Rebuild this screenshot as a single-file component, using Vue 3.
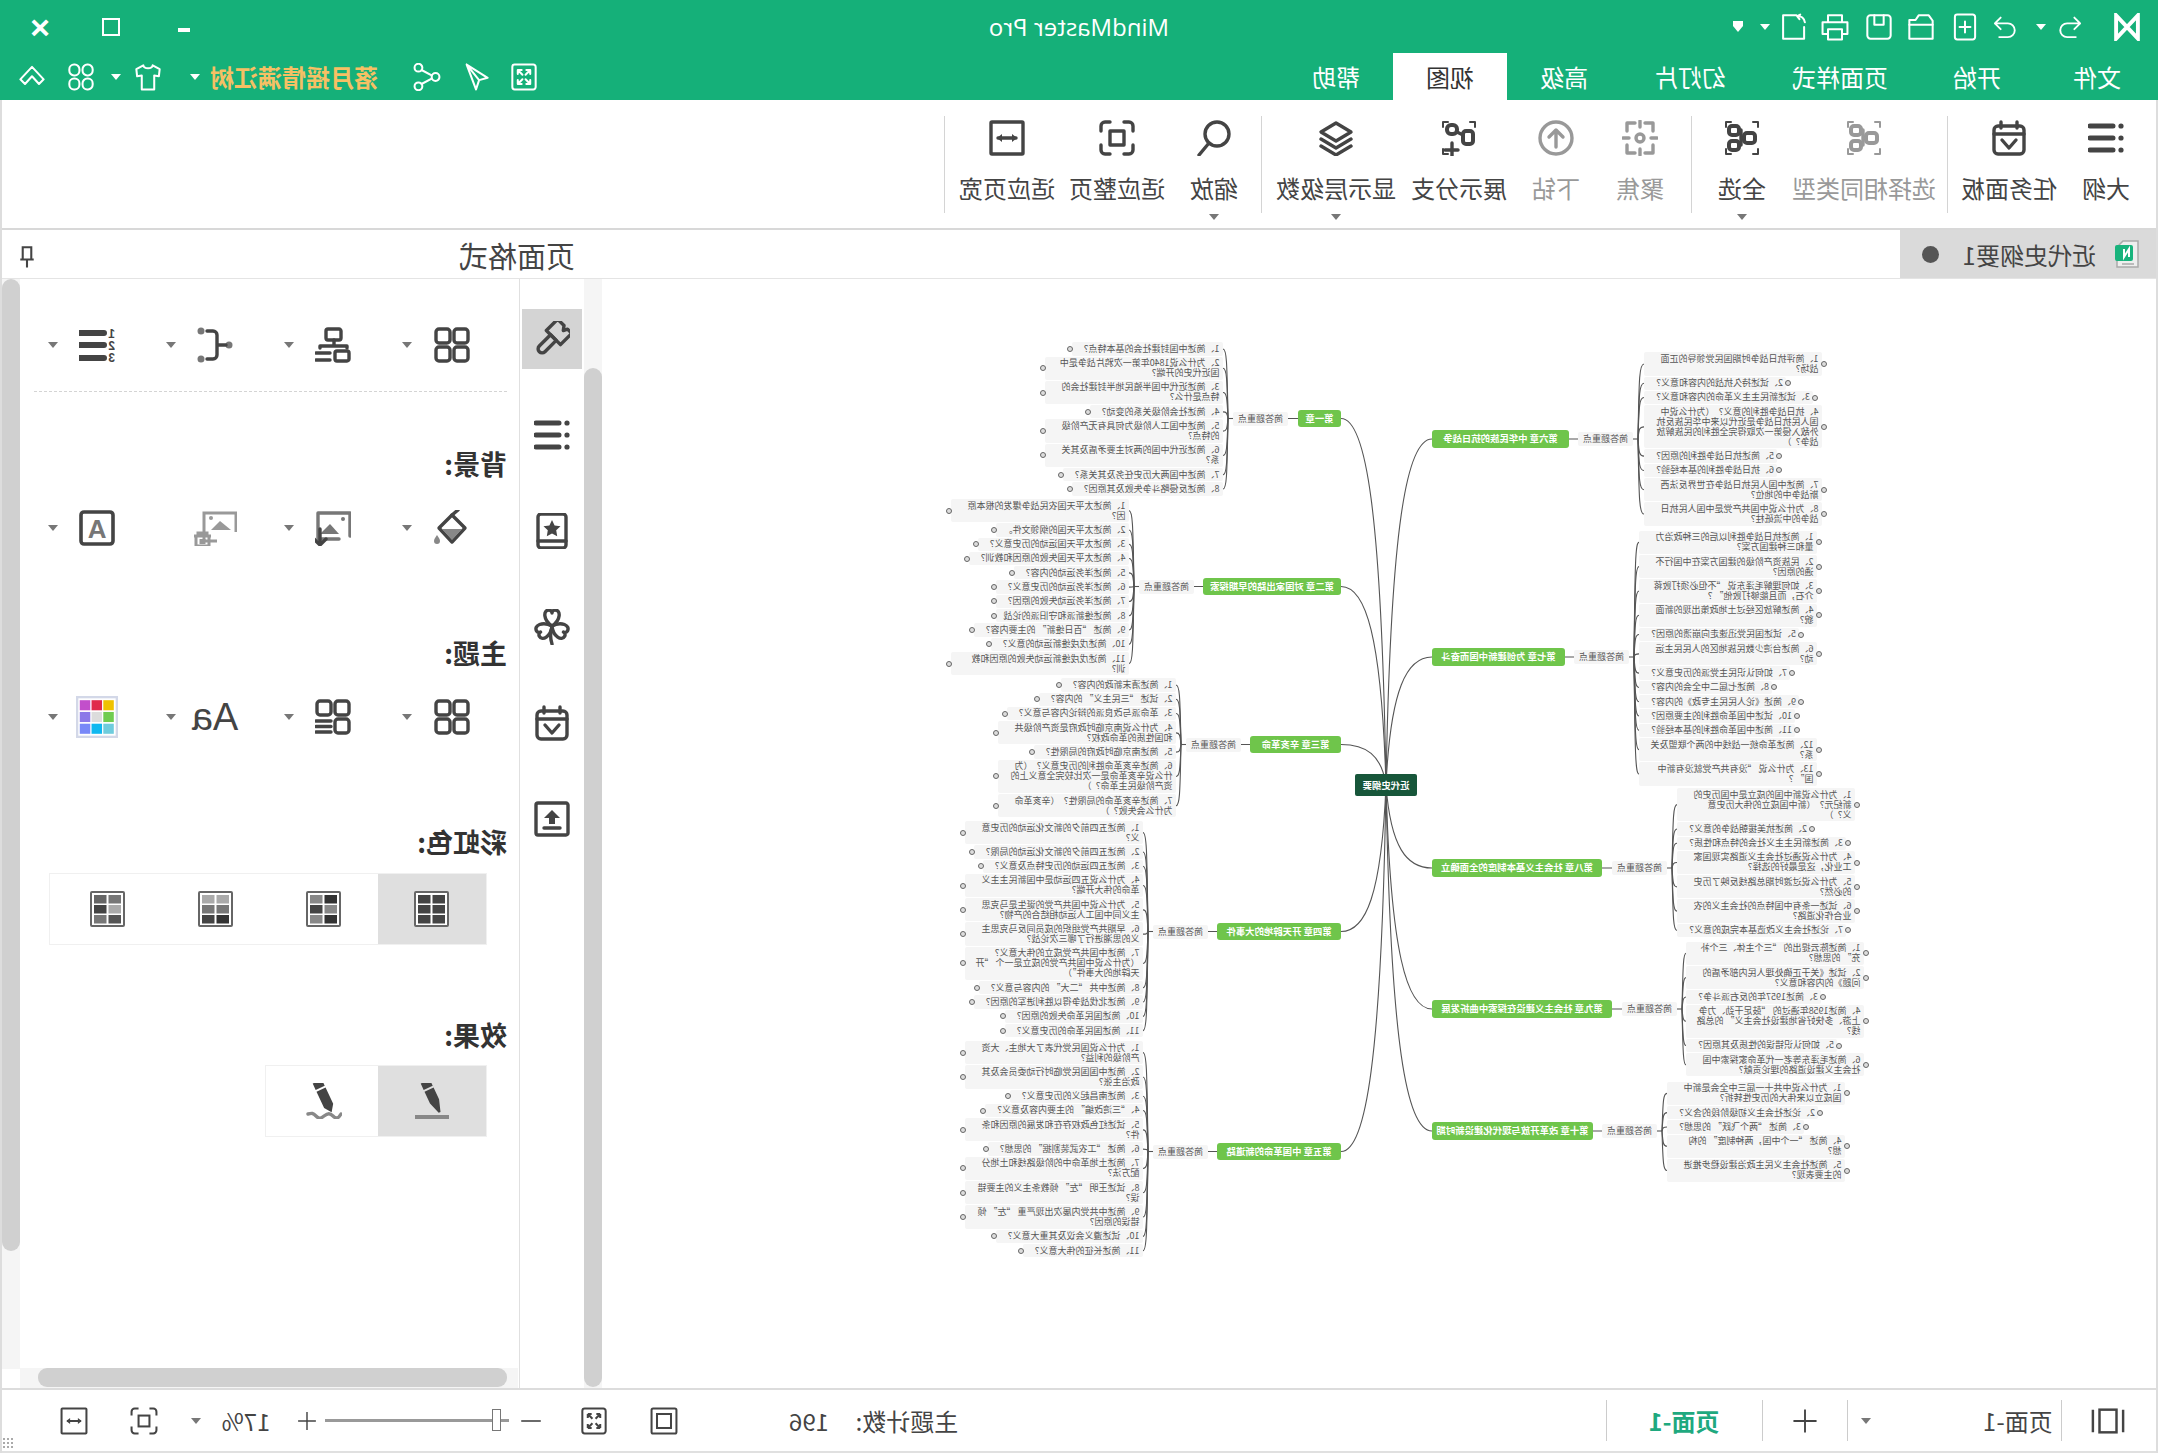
<script setup>
// the reference is a horizontally flipped window: everything below is laid out
// in the window's own coordinates and .app flips it once at the root
const dot = (x, y) => `<circle cx="${x}" cy="${y}" r="2.6" fill="currentColor" stroke="none"/>`
const outlineIcon = dot(3, 6) + dot(3, 18) + dot(3, 30) + '<path stroke-width="5" d="M11 6h23M11 18h23M11 30h23"/>'
const calendarIcon = '<rect x="3" y="6" width="30" height="28" rx="4"/><path d="M3 14h30M10 2v6M26 2v6M11 20l7 8 7-8"/>'
const corners = '<path stroke-width="2" d="M7 2H2v5M29 2h5v5M2 29v5h5M34 29v5h-5"/>'
const nodes = '<rect x="5" y="13" width="11" height="10" rx="3" stroke-width="4"/><rect x="21" y="6" width="10" height="9" rx="3" stroke-width="4"/><rect x="21" y="21" width="10" height="9" rx="3" stroke-width="4"/><path d="M16 18h3V10h2M19 18v7h2"/>'

const icons = {
  logo: '<path stroke-width="5" stroke-linejoin="miter" d="M4 3v30L32 3v30z"/>',
  undo: '<path d="M12 5 4 13l8 8M4 13h18a9 9 0 0 1 0 19H10"/>',
  redo: '<path d="M24 5l8 8-8 8M32 13H14a9 9 0 0 0 0 19h12"/>',
  newFile: '<rect x="5" y="2" width="26" height="32" rx="3"/><path d="M18 11v14M11 18h14"/>',
  open: '<path d="M3 33V10l5-7h13l4 6h8v24z"/><path d="M3 15h30"/>',
  save: '<rect x="3" y="3" width="30" height="30" rx="4"/><path d="M12 3v12h12V3"/>',
  print: '<path d="M9 12V3h18v9M9 27H2V12h32v15h-7"/><rect x="9" y="21" width="18" height="13"/>',
  exportFile: '<path d="M15 3h17v30H5V18"/><path d="M4 12c1-5 5-8 10-8M10 2l4 2-3 4"/>',
  chevron: '<path d="M18 5 33 21l-6 6-9-10-9 10-6-6z"/>',
  petals: '<rect x="3" y="2" width="13" height="14" rx="6"/><rect x="20" y="2" width="13" height="14" rx="6"/><rect x="3" y="20" width="13" height="14" rx="6"/><rect x="20" y="20" width="13" height="14" rx="6"/>',
  shirt: '<path d="M12 3 3 8l1 9 6-1v18h16V16l6 1 1-9-9-5c-1 5-11 5-12 0z"/>',
  share: '<circle cx="7" cy="18" r="5"/><circle cx="29" cy="6" r="5"/><circle cx="29" cy="30" r="5"/><path d="M12 16l13-7M12 20l13 7"/>',
  plane: '<path d="M30 2 3 19l11 3 4 12zM30 2 14 22"/>',
  full: '<rect x="3" y="2" width="30" height="32" rx="3"/><path d="M10 9h5M10 9v5M10 9l6 6M26 9h-5M26 9v5M26 9l-6 6M10 27h5M10 27v-5M10 27l6-6M26 27h-5M26 27v-5M26 27l-6-6"/>',
  outline: outlineIcon,
  task: calendarIcon,
  selectSame: corners + nodes,
  selectAll: corners + nodes,
  focus: '<circle cx="18" cy="18" r="4"/><path d="M13 3H5v8M23 3h8v8M5 25v8h8M31 25v8h-8M18 1v6M18 29v6M1 18h6M29 18h6"/>',
  drill: '<circle cx="18" cy="18" r="16"/><path d="M18 27V10M11 17l7-7 7 7"/>',
  branch: '<path stroke-width="2" d="M7 2H2v5M29 2h5v5M29 34h5v-5"/><rect x="4" y="11" width="10" height="13" rx="3" stroke-width="4"/><rect x="20" y="5" width="10" height="9" rx="4" stroke-width="4"/><path d="M14 15l6-3M25 23v13M19 30h13"/>',
  layers: '<path d="M18 3l15 9-15 9-15-9z"/><path d="M3 19l15 9 15-9M3 26l15 9 15-9"/>',
  zoom: '<circle cx="15" cy="14" r="12"/><path d="M23 23l10 12"/>',
  fitPage: '<path d="M11 2H6a4 4 0 0 0-4 4v5M25 2h5a4 4 0 0 1 4 4v5M2 25v5a4 4 0 0 0 4 4h5M34 25v5a4 4 0 0 1-4 4h-5"/><rect x="11" y="11" width="14" height="14"/>',
  fitWidth: '<rect x="2" y="2" width="32" height="32" rx="1"/><path d="M9 18h18"/><path fill="currentColor" stroke="none" d="M8 18l5-4v8zM28 18l-5-4v8z"/>',
  frame: '<rect x="2" y="2" width="32" height="32" rx="2"/><rect x="9" y="9" width="18" height="18"/>',
  plus: '<path d="M18 2v32M2 18h32"/>',
  minus: '<path d="M2 18h32"/>',
  pageView: '<rect x="9" y="6" width="18" height="24"/><path d="M2 6v24M34 6v24"/>',
  pin: '<path d="M11 2h14v20H11zM7 22h22M18 22v13" stroke-width="3.4"/>',
  grid: '<rect x="2" y="2" width="14" height="14" rx="3"/><rect x="20" y="2" width="14" height="14" rx="3"/><rect x="2" y="20" width="14" height="14" rx="3"/><rect x="20" y="20" width="14" height="14" rx="3"/>',
  org: '<rect x="10" y="2" width="15" height="11" rx="2"/><path d="M17 13v6M4 21v-2h27v2"/><rect x="2" y="24" width="14" height="10" rx="2"/><path d="M21 26h14M21 33h14"/>',
  connector: '<circle cx="4" cy="18" r="3.5" fill="#777" stroke="none"/><path d="M7 18h9M26 4h-6a4 4 0 0 0-4 4v20a4 4 0 0 0 4 4h6"/><circle cx="32" cy="4" r="3.5" fill="#777" stroke="none"/><circle cx="32" cy="32" r="3.5" fill="#777" stroke="none"/>',
  numbers: '<text x="0" y="11" font-size="12" font-family="Liberation Sans" font-weight="700" fill="currentColor" stroke="none">1</text><text x="0" y="23" font-size="12" font-family="Liberation Sans" font-weight="700" fill="currentColor" stroke="none">2</text><text x="0" y="35" font-size="12" font-family="Liberation Sans" font-weight="700" fill="currentColor" stroke="none">3</text><path stroke-width="6" d="M11 6h25M11 18h25M11 31h25"/>',
  bucket: '<path d="M18 5 31 18 18 32 5 18z"/><path fill="#888" stroke="none" d="M8 19h20L18 30z"/><path d="M12 0l6 5"/><path fill="#888" stroke="none" d="M33 25c2 3 3 4 3 6a3 3 0 0 1-6 0c0-2 1-3 3-6z"/>',
  pictureIn: '<path stroke="#777" d="M1 26V3h32v26H12"/><path fill="#777" d="M12 24l9-10 10 10z" stroke="none"/><circle cx="8" cy="9" r="2" fill="#777" stroke="none"/><path d="M31 19v16M25 29l6 6 6-6"/>',
  pictureOff: '<path d="M1 22V3h32v28H20"/><path fill="currentColor" stroke="none" d="M6 20l11-9 9 9z"/><circle cx="26" cy="8" r="2" fill="currentColor" stroke="none"/><path d="M26 26h17M30 26v-3h9v3M28 26v10h13V26M33 29v5M36 29v5"/>',
  letterBox: '<rect x="2" y="2" width="32" height="32" rx="3" stroke-width="3.6"/><text x="18" y="28" text-anchor="middle" font-size="26" font-family="Liberation Sans" font-weight="700" fill="#777" stroke="none">A</text>',
  gridList: '<rect x="2" y="2" width="14" height="14" rx="3"/><rect x="20" y="2" width="14" height="14" rx="3"/><rect x="2" y="20" width="14" height="14" rx="3"/><path d="M20 22h15M20 27.5h15M20 33h15"/>',
  palette: '<rect x="1" y="1" width="38" height="38" fill="#fff" stroke="#d3d8e8" stroke-width="2.4"/>' + [
    ['#efc200', '#e02a4b', '#c24fcb'], ['#70cc50', '#dcdcdc', '#8c78e8'], ['#6fccdd', '#10b8f0', '#7888f8']
  ].map((row, r) => row.map((c, k) => `<rect x="${4 + k * 11.2}" y="${4 + r * 11.2}" width="10" height="9.6" fill="${c}" stroke="none"/>`).join('')).join(''),
  brush: '<g transform="rotate(-45 18 18)"><path d="M8 0h6l2 4 3-4h9v16H8z"/><path d="M14 16h8v16a4 4 0 0 1-8 0z"/></g>',
  bookStar: '<rect x="4" y="1" width="28" height="34" rx="3"/><path d="M4 28h28"/><path fill="currentColor" stroke="none" d="M18 7l2.6 5.4 5.9.8-4.3 4.1 1 5.9-5.2-2.8-5.2 2.8 1-5.9-4.3-4.1 5.9-.8z"/>',
  clover: '<path d="M18 17C9 11 9 1 15 1c2 0 3 2 3 3 0-1 1-3 3-3 6 0 6 10-3 16z"/><path transform="rotate(118 18 17)" d="M18 17C9 11 9 1 15 1c2 0 3 2 3 3 0-1 1-3 3-3 6 0 6 10-3 16z"/><path transform="rotate(242 18 17)" d="M18 17C9 11 9 1 15 1c2 0 3 2 3 3 0-1 1-3 3-3 6 0 6 10-3 16z"/><path d="M18 18c2 6 2 11 0 17"/>',
  upload: '<rect x="2" y="2" width="32" height="32" rx="2"/><path fill="currentColor" stroke="none" d="M18 9l8 8h-5v6h-6v-6h-5z"/><path d="M10 27h16"/>',
  pen: '<g transform="rotate(25 18 13)"><path fill="currentColor" stroke="none" d="M13-3h10v7H13zM13 6h10v13l-4 12h-2l-4-12z"/></g><rect x="1" y="32" width="34" height="5" fill="#888" stroke="none"/>',
  pencil: '<g transform="rotate(25 18 13)"><path fill="currentColor" stroke="none" d="M13-3h10v7H13zM13 6h10v18l-5 7-5-7z"/></g><path stroke="#888" d="M1 31c3 5 5 5 8 2s5-3 9 0 5 3 8 0 4-3 8-2"/>'
}

// flow helper: turns wanted centre positions into widths and margins
function place(list, start = 0) {
  let right = start
  return list.map((it) => {
    const left = it.c - it.w / 2
    const out = { ...it, ml: left - right }
    right = it.c + it.w / 2
    return out
  })
}

const titleRow = place([
  { i: 'logo', c: 31, w: 34 }, { i: 'undo', c: 88, w: 26 }, { caret: 1, c: 117, w: 10 },
  { i: 'redo', c: 153, w: 26 }, { i: 'newFile', c: 193, w: 28 }, { i: 'open', c: 237, w: 30 },
  { i: 'save', c: 279, w: 28 }, { i: 'print', c: 323, w: 30 }, { i: 'exportFile', c: 364, w: 28 },
  { caret: 1, c: 393, w: 10 }, { bar: 1, c: 420, w: 10 },
  { t: 'MindMaster Pro', c: 1079, w: 190 },
  { winMin: 1, c: 1974, w: 12 }, { winMax: 1, c: 2047, w: 18 }, { t: '×', close: 1, c: 2118, w: 24 }
])

const tabRow = place([
  { t: '文件', c: 61, w: 80 }, { t: '开始', c: 181, w: 114 }, { t: '页面样式', c: 318, w: 162 },
  { t: '幻灯片', c: 468, w: 138 }, { t: '高级', c: 594, w: 114 }, { t: '视图', c: 708, w: 114, on: 1 },
  { t: '帮助', c: 822, w: 114 },
  { i: 'full', c: 1634, w: 30 }, { i: 'plane', c: 1682, w: 30 }, { i: 'share', c: 1731, w: 30 },
  { t: '落月摇情满江树', c: 1864, w: 168, gold: 1 }, { caret: 1, c: 1963, w: 10 },
  { i: 'shirt', c: 2010, w: 30 }, { caret: 1, c: 2042, w: 10 }, { i: 'petals', c: 2077, w: 30 },
  { i: 'chevron', c: 2126, w: 30 }
])

const ribbon = place([
  { t: '大纲', i: 'outline', c: 52, w: 48 }, { t: '任务面板', i: 'task', c: 149, w: 96 }, { sep: 1, c: 210, w: 1 },
  { t: '选择相同类型', i: 'selectSame', c: 294, w: 144, off: 1 }, { t: '全选', i: 'selectAll', c: 416, w: 48, more: 1 },
  { sep: 1, c: 466, w: 1 }, { t: '聚焦', i: 'focus', c: 518, w: 48, off: 1 }, { t: '下钻', i: 'drill', c: 602, w: 48, off: 1 },
  { t: '展示分支', i: 'branch', c: 699, w: 96 }, { t: '显示层级数', i: 'layers', c: 822, w: 120, more: 1 }, { sep: 1, c: 896, w: 1 },
  { t: '缩放', i: 'zoom', c: 944, w: 48, more: 1 }, { t: '适应整页', i: 'fitPage', c: 1041, w: 96 },
  { t: '适应页宽', i: 'fitWidth', c: 1151, w: 96 }, { sep: 1, c: 1213, w: 1 }
])

const sideTabs = ['brush', 'outline', 'bookStar', 'clover', 'task', 'upload']

const panelStart = 1639
const row = (a, b, c, d) => place([
  { ...a, c: 1706, w: 36 }, { caret: 1, c: 1751, w: 12 },
  { ...b, c: 1825, w: 38 }, { caret: 1, c: 1869, w: 12 },
  { ...c, c: 1943, w: 44 }, ...(c.noCaret ? [] : [{ caret: 1, c: 1987, w: 12 }]),
  { ...d, c: 2061, w: 40 }, { caret: 1, c: 2105, w: 12 }
], panelStart)
const panelRow1 = row({ i: 'grid' }, { i: 'org' }, { i: 'connector' }, { i: 'numbers' })
const panelRow2 = row({ i: 'bucket' }, { i: 'pictureIn' }, { i: 'pictureOff', noCaret: 1, wide: 1 }, { i: 'letterBox' })
const panelRow3 = row({ i: 'grid' }, { i: 'gridList' }, { aa: 1 }, { i: 'palette' })

const rainbow = [
  [['#444', '#444'], ['#444', '#444'], ['#444', '#444']],
  [['#333', '#888'], ['#888', '#444'], ['#333', '#888']],
  [['#aaa', '#aaa'], ['#777', '#777'], ['#333', '#444']],
  [['#777', '#666'], ['#aaa', '#444'], ['#555', '#777']]
]

const statusRow = place([
  { i: 'pageView', c: 50, w: 34 }, { sep: 1, c: 96, w: 1 }, { t: '页面-1', c: 140, w: 70 },
  { caret: 1, c: 292, w: 12 }, { sep: 1, c: 310, w: 1 }, { i: 'plus', c: 353, w: 26 },
  { sep: 1, c: 395, w: 1 }, { t: '页面-1', c: 474, w: 70, on: 1 }, { sep: 1, c: 551, w: 1 },
  { t: '主题计数:', c: 1251, w: 106 }, { t: '196', c: 1349, w: 42 },
  { i: 'frame', c: 1494, w: 28 }, { i: 'full', c: 1564, w: 28 }, { i: 'minus', c: 1627, w: 22 },
  { slider: 1, c: 1741, w: 184 }, { i: 'plus', c: 1851, w: 20 }, { t: '17%', c: 1912, w: 50 },
  { caret: 1, c: 1962, w: 12 }, { i: 'fitPage', c: 2014, w: 28 }, { i: 'fitWidth', c: 2084, w: 28 }
])

// mind map, in window coordinates. "|" is a forced line break inside a topic
const ROOT = { x: 772, y: 785 }
const chapters = [
  { title: '第一章', side: 'r', y: 418.5, x: 817, w: 43, sum: 870, edge: 935, top: 342.3, items: [
    '简述中国封建社会的基本特点？', '为什么说1840年第一次鸦片战争是中|国近代史的开端？', '简述近代中国半殖民地半封建社会的|特点是什么？',
    '简述社会阶级关系的变动？', '简述中国工人阶级为何具有无产阶级|的特点?', '简述近代中国的两对主要矛盾及其关|系？',
    '简述中国两大历史任务及其关系？', '简述反侵略斗争失败及其原因？'] },
  { title: '第二章 对国家出路的早期探索', side: 'r', y: 586.5, x: 817, w: 138, sum: 964, edge: 1029, top: 499, items: [
    '简述太平天国农民战争爆发的根本原|因？', '简述太平天国的纲领文件。', '简述太平天国运动的历史意义？', '简述太平天国失败的原因和教训？',
    '简述洋务运动的内容？', '简述洋务运动的历史意义？', '简述洋务运动失败的原因？', '简述维新派和守旧派的论战',
    '简述 “百日维新” 的主要内容？', '简述戊戌维新运动的意义？', '简述戊戌维新运动失败的原因和教|训？'] },
  { title: '第三章 辛亥革命', side: 'r', y: 744.5, x: 817, w: 91, sum: 917, edge: 982, top: 678.3, items: [
    '简述清末新政的内容？', '试述 “三民主义” 的内容？', '革命派与改良派的辩论内容与意义？',
    '为什么说南京临时政府是资产阶级共|和国性质的革命政权？', '简述南京临时政府的局限性？',
    '简述辛亥革命胜利的历史意义？（为|什么说辛亥革命是一次比较完全意义上的|资产阶级民主革命？）', '简述辛亥革命的局限性？（辛亥革命|为什么会失败？）'] },
  { title: '第四章 开天辟地的大事件', side: 'r', y: 931.5, x: 817, w: 124, sum: 950, edge: 1015, top: 821, items: [
    '简述五四前夕的新文化运动的历史意|义？', '简述五四前夕的新文化运动的局限？', '简述五四运动的历史特点及意义？',
    '为什么说五四运动是中国新民主主义|革命的伟大开端？', '为什么说中国共产党的诞生是马克思|主义同中国工人运动相结合的产物？',
    '早期共产党组织的成员同反马克思主|义的思潮进行了哪三次论战？', '简述中国共产党成立的伟大意义？|（为什么说中国共产党的成立是一个 “开|天辟地的大事件”）',
    '简述中共 “二大” 的内容与意义？', '简述北伐战争得以胜利进军的原因？', '简述国民革命失败的原因？', '简述国民革命的历史意义？'] },
  { title: '第五章 中国革命的新道路', side: 'r', y: 1151.5, x: 817, w: 124, sum: 950, edge: 1015, top: 1041, items: [
    '为什么说国民党代表了大地主、大资|产阶级的利益？', '简述中国国民党临时行动委员会及其|政治主张？', '简述南昌起义的历史意义？',
    '“三湾改编” 的主要内容及意义？', '试述红色政权存在和发展的原因和条|件？', '简述 “工农武装割据” 的思想？',
    '简述土地革命中的阶级路线和土地分|配方法？', '试述王明 “左” 倾教条主义的主要错|误？', '简述中共党内屡次出现严重 “左” 倾|错误的原因？',
    '试述遵义会议及其重大意义？', '简述长征的伟大意义？'] },
  { title: '第六章 中华民族的抗日战争', side: 'l', y: 439, x: 589, w: 137, sum: 525, edge: 514, top: 352.3, items: [
    '简评抗日战争时期国民党领导的正面|战场？', '试述持久抗战的内容和意义？', '试述新民主主义革命的内容和意义？',
    '抗日战争胜利的意义？（为什么说中|国人民抗日战争是近代以来中华民族反抗|外敌入侵第一次取得完全胜利的民族解放|战争？）',
    '简述抗日战争胜利的原因？', '抗日战争胜利的基本经验？', '简述中国人民抗日战争在世界反法西|斯战争中的地位？', '为什么说中国共产党是中国人民抗日|战争的中流砥柱？'] },
  { title: '第七章 为创建新中国而奋斗', side: 'l', y: 657, x: 593, w: 133, sum: 529, edge: 519, top: 530.7, items: [
    '简述抗日战争胜利以后的三种政治力|量和三种建国方案？', '民族资产阶级的建国方案在中国行不|通的原因？', '如何理解毛泽东说 “不但必须打败蒋|介石，而且能够打败他” ？',
    '简述解放区经过土地政策出现的新面|貌？', '试述国民党迅速走向崩溃的原因？', '简述台湾少数民族地区的人民民主运|动？',
    '如何认识民主党派的历史意义？', '简述七届二中全会的内容？', '简述《论人民民主专政》的内容？', '试述中国革命胜利的主要原因？',
    '简述中国革命胜利的基本经验？', '简述革命统一战线中的两个联盟及关|系？', '为什么说 “没有共产党就没有新中|国” ？'] },
  { title: '第八章 社会主义基本制度的全面确立', side: 'l', y: 868, x: 556, w: 170, sum: 491, edge: 481, top: 788, items: [
    '为什么说新中国的成立是中国历史的|新纪元？（新中国成立的伟大历史意|义？）', '简述抗美援朝战争的意义？', '简述新民主主义社会的特点和性质？',
    '为什么说通过社会主义道路实现国家|工业化，这是最好的选择？', '为什么说过渡时期总路线反映了历史|的必然？', '试述一条有中国特点的社会主义的农|业合作化道路？', '论述社会主义改造基本完成的意义？'] },
  { title: '第九章 社会主义建设在探索中曲折发展', side: 'l', y: 1009, x: 546, w: 180, sum: 481, edge: 472, top: 941.7, items: [
    '简述陈云提出的 “三个主体、三个补|充” 的思想？', '试述《关于正确处理人民内部矛盾的|问题》的内容和意义？', '简述1957年的反右派斗争？',
    '简述1958年通过的 “鼓足干劲、力争|上游、多快好省地建设社会主义” 的总路|线？', '如何认识错误的性质及其原因？', '简述毛泽东等老一代革命家探索中国|社会主义建设道路的理论贡献？'] },
  { title: '第十章 改革开放与现代化建设新时期', side: 'l', y: 1131, x: 565, w: 161, sum: 501, edge: 491, top: 1081.7, items: [
    '为什么说中共十一届三中全会是新中|国成立以来伟大的历史性转折？', '论述社会主义初级阶段的含义？', '简述 “两个飞跃” 的思想？',
    '简述 “一个中国，两种制度” 的构|想？', '简述社会主义民主政治建设稳步推进|的主要表现？'] }
]

const CANVAS_W = 1556
const CANVAS_TOP = 279
const SUM_W = 55

function topicRows(ch) {
  let y = ch.top
  return ch.items.map((text, k) => {
    const lines = text.split('|')
    lines[0] = `${k + 1}、${lines[0]}`
    const h = lines.length * 10 + 3.3
    const row = { lines, h, cy: y + h / 2 }
    y += h + 1
    return row
  })
}

const blocks = chapters.map((ch) => ({ ...ch, rows: topicRows(ch) }))

const links = []
blocks.forEach((ch) => {
  const right = ch.side === 'r'
  const cx = right ? ch.x : ch.x + ch.w
  const dx = cx - ROOT.x
  links.push(`M${ROOT.x} ${ROOT.y}C${ROOT.x + dx * 0.1} ${ROOT.y + (ch.y - ROOT.y) * 0.75} ${ROOT.x + dx * 0.45} ${ch.y} ${cx} ${ch.y}`)
  const sumNear = right ? ch.sum : ch.sum + SUM_W
  links.push(`M${cx} ${ch.y}H${sumNear}`)
  const sumFar = right ? ch.sum + SUM_W : ch.sum
  const bx = sumFar + (right ? 5 : -5)
  links.push(`M${sumFar} ${ch.y}H${bx}`)
  ch.rows.forEach((r) => {
    const k = right ? 1 : -1
    links.push(`M${bx} ${ch.y}C${bx + k} ${ch.y + (r.cy - ch.y) * 0.85} ${bx + k * 1.5} ${r.cy} ${ch.edge} ${r.cy}`)
  })
})
</script>

<template>
  <div class="app">
    <header class="head">
      <div class="title-row">
        <div v-for="(it, n) in titleRow" :key="n" class="cell" :style="{ marginLeft: it.ml + 'px', width: it.w + 'px' }">
          <svg v-if="it.i" class="ic" viewBox="0 0 36 36" v-html="icons[it.i]"></svg>
          <i v-else-if="it.caret" class="caret caret-w"></i>
          <i v-else-if="it.bar" class="bar-caret"></i>
          <i v-else-if="it.winMin" class="win-min"></i>
          <i v-else-if="it.winMax" class="win-max"></i>
          <span v-else :class="it.close ? 'win-close' : 'app-name'">{{ it.t }}</span>
        </div>
      </div>
      <div class="tab-row">
        <div v-for="(it, n) in tabRow" :key="n" class="cell" :class="{ 'tab-on': it.on }" :style="{ marginLeft: it.ml + 'px', width: it.w + 'px' }">
          <svg v-if="it.i" class="ic" viewBox="0 0 36 36" v-html="icons[it.i]"></svg>
          <i v-else-if="it.caret" class="caret caret-w"></i>
          <span v-else :class="{ gold: it.gold }">{{ it.t }}</span>
        </div>
      </div>
    </header>

    <section class="ribbon">
      <template v-for="(it, n) in ribbon" :key="n">
        <div v-if="it.sep" class="ribbon-sep" :style="{ marginLeft: it.ml + 'px' }"></div>
        <div v-else class="tool" :class="{ off: it.off }" :style="{ marginLeft: it.ml + 'px', width: it.w + 'px' }">
          <svg class="tool-ic" viewBox="0 0 36 36" v-html="icons[it.i]"></svg>
          <span class="tool-name">{{ it.t }}</span>
          <i v-if="it.more" class="caret caret-d"></i>
        </div>
      </template>
    </section>

    <section class="doc-bar">
      <div class="doc-tab">
        <svg class="doc-ic" viewBox="0 0 24 28">
          <path d="M1 1h15l6 6v20H1z" fill="#eee" stroke="#aaa" stroke-width="1.5" />
          <path d="M5 24h12" stroke="#aaa" stroke-width="1.5" />
          <rect x="6" y="5" width="18" height="16" rx="2" fill="#18b37c" />
          <path d="M10 17V9l5 8V9" fill="none" stroke="#fff" stroke-width="2" />
        </svg>
        <span class="doc-name">近代史纲要1</span>
        <i class="doc-dot"></i>
      </div>
      <span class="panel-title">页面格式</span>
      <svg class="pin" viewBox="0 0 36 36" v-html="icons.pin"></svg>
    </section>

    <main class="body">
      <div class="map">
        <svg class="links" :viewBox="`0 ${CANVAS_TOP} ${CANVAS_W} 1109`">
          <path v-for="(d, n) in links" :key="n" :d="d" />
        </svg>
        <div class="root-node" :style="{ left: '741px', top: 774 - CANVAS_TOP + 'px' }">近代史纲要</div>
        <template v-for="ch in blocks" :key="ch.title">
          <div class="chapter" :style="{ left: ch.x + 'px', top: ch.y - 8.7 - CANVAS_TOP + 'px', width: ch.w + 'px' }">{{ ch.title }}</div>
          <div class="summary" :style="{ left: ch.sum + 'px', top: ch.y - 7 - CANVAS_TOP + 'px' }">简答题重点</div>
          <div
            class="topics"
            :class="ch.side === 'r' ? 'on-right' : 'on-left'"
            :style="ch.side === 'r'
              ? { left: ch.edge + 'px', top: ch.top - CANVAS_TOP + 'px' }
              : { right: CANVAS_W - ch.edge + 'px', top: ch.top - CANVAS_TOP + 'px' }"
          >
            <div v-for="(r, k) in ch.rows" :key="k" class="topic" :class="{ multi: r.lines.length > 1 }" :style="{ height: r.h + 'px' }">
              <div v-for="line in r.lines" :key="line">{{ line }}</div>
            </div>
          </div>
        </template>
      </div>

      <div class="side-tabs">
        <div v-for="(name, n) in sideTabs" :key="name" class="side-tab" :class="{ on: n === 0 }">
          <svg class="tool-ic" viewBox="0 0 36 36" v-html="icons[name]"></svg>
        </div>
      </div>

      <aside class="panel">
        <div class="panel-row first">
          <div v-for="(it, n) in panelRow1" :key="n" class="cell" :style="{ marginLeft: it.ml + 'px', width: it.w + 'px' }">
            <svg v-if="it.i" class="tool-ic" viewBox="0 0 36 36" v-html="icons[it.i]"></svg>
            <i v-else class="caret caret-d"></i>
          </div>
        </div>
        <div class="dash"></div>
        <div class="label after-dash">背景:</div>
        <div class="panel-row">
          <div v-for="(it, n) in panelRow2" :key="n" class="cell" :style="{ marginLeft: it.ml + 'px', width: it.w + 'px' }">
            <svg v-if="it.wide" class="wide-ic" viewBox="0 0 44 36" v-html="icons[it.i]"></svg>
            <svg v-else-if="it.i" class="tool-ic" viewBox="0 0 36 36" v-html="icons[it.i]"></svg>
            <i v-else class="caret caret-d"></i>
          </div>
        </div>
        <div class="label">主题:</div>
        <div class="panel-row">
          <div v-for="(it, n) in panelRow3" :key="n" class="cell" :style="{ marginLeft: it.ml + 'px', width: it.w + 'px' }">
            <span v-if="it.aa" class="aa">Aa</span>
            <svg v-else-if="it.i === 'palette'" class="pal-ic" viewBox="0 0 40 40" v-html="icons[it.i]"></svg>
            <svg v-else-if="it.i" class="tool-ic" viewBox="0 0 36 36" v-html="icons[it.i]"></svg>
            <i v-else class="caret caret-d"></i>
          </div>
        </div>
        <div class="label">彩虹色:</div>
        <div class="swatches wide">
          <div v-for="(cells, n) in rainbow" :key="n" class="swatch" :class="{ on: n === 0 }">
            <svg class="grid-ic" viewBox="0 0 35 36">
              <rect x="1" y="1" width="33" height="34" rx="1" fill="#fff" stroke="#666" stroke-width="2" />
              <template v-for="(pair, r) in cells" :key="r">
                <rect x="4" :y="4 + r * 10" width="12.5" height="8.5" :fill="pair[0]" />
                <rect x="18.5" :y="4 + r * 10" width="12.5" height="8.5" :fill="pair[1]" />
              </template>
            </svg>
          </div>
        </div>
        <div class="label effect">效果:</div>
        <div class="swatches">
          <div class="swatch on"><svg class="tool-ic" viewBox="0 0 36 36" v-html="icons.pen"></svg></div>
          <div class="swatch"><svg class="tool-ic" viewBox="0 0 36 36" v-html="icons.pencil"></svg></div>
        </div>
      </aside>

      <!-- scrollbars sit over the panes -->
      <div class="track map-track"><div class="thumb map-thumb"></div></div>
      <div class="track panel-track"><div class="thumb panel-thumb"></div></div>
      <div class="track h-track"><div class="thumb h-thumb"></div></div>
    </main>

    <footer class="status">
      <template v-for="(it, n) in statusRow" :key="n">
        <div v-if="it.sep" class="status-sep" :style="{ marginLeft: it.ml + 'px' }"></div>
        <div v-else class="cell" :style="{ marginLeft: it.ml + 'px', width: it.w + 'px' }">
          <svg v-if="it.i" class="ic-fill" viewBox="0 0 36 36" v-html="icons[it.i]"></svg>
          <i v-else-if="it.caret" class="caret caret-d"></i>
          <div v-else-if="it.slider" class="slider"><i class="knob"></i></div>
          <span v-else :class="{ 'page-on': it.on }">{{ it.t }}</span>
        </div>
      </template>
      <div class="grip"></div>
    </footer>
  </div>
</template>

<style scoped>
.app {
  position: relative;
  width: 2158px;
  height: 1453px;
  overflow: hidden;
  background: #fff;
  color: #444;
  font-family: "Noto Sans CJK SC", "Noto Sans", sans-serif;
  font-size: 24px;
  transform: scaleX(-1);
}

.app::after {
  content: "";
  position: absolute;
  inset: 100px 0 0;
  border: solid #ddd;
  border-width: 0 2px;
  pointer-events: none;
}

.head {
  height: 100px;
  background: #15b079;
  color: #fff;
}

.title-row {
  display: flex;
  align-items: center;
  height: 53px;
}

.tab-row {
  display: flex;
  align-items: center;
  height: 47px;
}

.cell {
  display: flex;
  flex: none;
  align-items: center;
  justify-content: center;
  white-space: nowrap;
}

.tab-row .cell {
  height: 47px;
  line-height: 47px;
}

.tab-on {
  background: #fff;
  color: #333;
}

.gold {
  color: #f6c064;
  font-weight: 700;
}

.ic {
  width: 28px;
  height: 28px;
  fill: none;
  stroke: #fff;
  stroke-width: 2.6;
  stroke-linecap: round;
  stroke-linejoin: round;
}

.app-name {
  font-family: "Open Sans", sans-serif;
  font-size: 24px;
}

.caret {
  display: block;
  width: 0;
  height: 0;
  border-style: solid;
  border-color: transparent;
  border-width: 6px 5px 0;
}

.caret-w {
  border-top-color: #fff;
}

.caret-d {
  border-top-color: #777;
}

.bar-caret {
  display: block;
  width: 0;
  height: 0;
  margin-top: 4px;
  border: solid transparent;
  border-width: 6px 5px 0;
  border-top-color: #fff;
  box-shadow: 0 -5px 0 0 #fff;
}

.win-min {
  display: block;
  width: 12px;
  height: 4px;
  margin-top: 7px;
  background: #fff;
}

.win-max {
  display: block;
  width: 18px;
  height: 18px;
  border: 2px solid #fff;
  box-sizing: border-box;
}

.win-close {
  color: #fff;
  font-family: "Liberation Sans", sans-serif;
  font-size: 34px;
  font-weight: 700;
  line-height: 34px;
}

.ribbon {
  display: flex;
  box-sizing: border-box;
  height: 130px;
  border-bottom: 2px solid #d8d8d8;
}

.ribbon-sep {
  flex: none;
  width: 1px;
  height: 97px;
  margin-top: 16px;
  background: #d4d4d4;
}

.tool {
  display: flex;
  flex: none;
  flex-direction: column;
  align-items: center;
  padding-top: 20px;
  white-space: nowrap;
}

.tool-ic {
  flex: none;
  width: 36px;
  height: 36px;
  fill: none;
  stroke: currentColor;
  stroke-width: 3.4;
  stroke-linecap: round;
  stroke-linejoin: round;
}

.tool-name {
  margin-top: 17px;
  line-height: 30px;
}

.tool .caret {
  margin-top: 11px;
}

.off {
  color: #999;
}

.doc-bar {
  display: flex;
  align-items: center;
  box-sizing: border-box;
  height: 49px;
  border-bottom: 1px solid #e4e4e4;
}

.doc-tab {
  display: flex;
  flex: none;
  align-items: center;
  box-sizing: border-box;
  width: 258px;
  height: 48px;
  padding-left: 19px;
  background: #dadada;
}

.doc-ic {
  width: 24px;
  height: 28px;
}

.doc-name {
  margin-left: 19px;
}

.doc-dot {
  width: 17px;
  height: 17px;
  margin-left: 24px;
  border-radius: 50%;
  background: #555;
}

.panel-title {
  margin-top: 2px;
  margin-left: 1325px;
  font-size: 29px;
}

.pin {
  width: 22px;
  height: 22px;
  margin-top: 6px;
  margin-left: 421px;
  fill: none;
  stroke: #444;
}

.body {
  position: relative;
  display: flex;
  height: 1109px;
}

.map {
  position: relative;
  flex: none;
  width: 1556px;
  overflow: hidden;
}

.links {
  position: absolute;
  top: 0;
  left: 0;
  width: 1556px;
  height: 1109px;
  fill: none;
  stroke: #555;
  stroke-width: 1.1;
}

.root-node {
  position: absolute;
  width: 62px;
  height: 22px;
  border-radius: 2px;
  background: #17563a;
  color: #fff;
  font-size: 9.4px;
  font-weight: 700;
  line-height: 22px;
  text-align: center;
}

.chapter {
  position: absolute;
  height: 17.4px;
  border-radius: 3px;
  background: #6fc54b;
  color: #fff;
  font-size: 9.4px;
  font-weight: 700;
  line-height: 17.4px;
  text-align: center;
  white-space: nowrap;
}

.summary {
  position: absolute;
  width: 55px;
  height: 14px;
  border-radius: 2px;
  background: #f5f5f5;
  color: #555;
  font-size: 9px;
  line-height: 14px;
  text-align: center;
  white-space: nowrap;
}

.topics {
  position: absolute;
  display: flex;
  flex-direction: column;
  gap: 1px;
}

.on-right {
  align-items: flex-start;
}

.on-left {
  align-items: flex-end;
}

.topic {
  position: relative;
  box-sizing: border-box;
  padding: 1.6px 8px 0 3.4px;
  border-radius: 2px;
  background: #f5f5f5;
  color: #555;
  font-size: 9px;
  line-height: 10px;
  white-space: nowrap;
}

.multi {
  width: 178px;
}

/* collapse knob at the outer end of each topic */
.topic::after {
  content: "";
  position: absolute;
  top: 50%;
  width: 4px;
  height: 4px;
  margin-top: -3px;
  border: 1px solid #666;
  border-radius: 50%;
  background: #ddd;
}

.on-right .topic::after {
  right: -5px;
}

.on-left .topic::after {
  left: -5px;
}

.side-tabs {
  display: flex;
  flex: none;
  flex-direction: column;
  gap: 36px;
  box-sizing: border-box;
  width: 83px;
  padding: 30px 0 0 20px;
  border-right: 1px solid #e0e0e0;
}

.side-tab {
  display: flex;
  align-items: center;
  justify-content: center;
  width: 60px;
  height: 60px;
}

.side-tab.on {
  background: #d4d4d4;
}

.panel {
  flex: none;
  width: 500px;
  padding-top: 48px;
}

.panel-row {
  display: flex;
  align-items: center;
  height: 36px;
  margin-top: 32px;
}

.panel-row.first {
  margin-top: 0;
}

.dash {
  width: 473px;
  margin: 28px 0 0 12px;
  border-top: 1px dashed #d4d4d4;
}

.label {
  height: 28px;
  margin: 93px 0 0 12px;
  color: #333;
  font-size: 27px;
  font-weight: 700;
  line-height: 28px;
}

.label.after-dash {
  margin-top: 58px;
}

.label.effect {
  margin-top: 76px;
}

.wide-ic {
  flex: none;
  width: 44px;
  height: 36px;
  fill: none;
  stroke: #999;
  stroke-width: 3;
  color: #999;
}

.pal-ic {
  flex: none;
  width: 42px;
  height: 42px;
}

.aa {
  color: #444;
  font-family: "Liberation Sans", sans-serif;
  font-size: 38px;
  line-height: 36px;
}

.swatches {
  display: flex;
  box-sizing: border-box;
  width: 222px;
  height: 72px;
  margin: 16px 0 0 32px;
  border: 1px solid #f0f0f0;
}

.swatches.wide {
  width: 438px;
  margin-top: 17px;
}

.swatch {
  display: flex;
  flex: none;
  align-items: center;
  justify-content: center;
  width: 108px;
}

.swatch.on {
  background: #dfdfdf;
}

.grid-ic {
  width: 35px;
  height: 36px;
}

.track {
  position: absolute;
  background: #f5f5f5;
}

.thumb {
  position: absolute;
  border-radius: 9px;
  background: #d0d0d0;
}

.map-track {
  top: 0;
  bottom: 0;
  left: 1556px;
  width: 18px;
}

.map-thumb {
  top: 89px;
  bottom: 1px;
  width: 18px;
}

.panel-track {
  top: 0;
  bottom: 19px;
  left: 2138px;
  width: 18px;
}

.panel-thumb {
  top: 0;
  width: 18px;
  height: 972px;
}

.h-track {
  bottom: 0;
  left: 1640px;
  width: 498px;
  height: 20px;
}

.h-thumb {
  top: 0;
  left: 11px;
  width: 469px;
  height: 19px;
}

.status {
  position: relative;
  display: flex;
  align-items: center;
  box-sizing: border-box;
  height: 65px;
  border-top: 2px solid #dcdcdc;
  border-bottom: 2px solid #e0e0e0;
}

.status-sep {
  flex: none;
  width: 1px;
  height: 41px;
  background: #ccc;
}

.ic-fill {
  flex: none;
  width: 100%;
  fill: none;
  stroke: #444;
  stroke-width: 2.6;
}

.page-on {
  color: #1fa97f;
  font-weight: 700;
}

.slider {
  position: relative;
  width: 100%;
  height: 3px;
  background: #999;
}

.knob {
  position: absolute;
  top: -10px;
  left: 8px;
  box-sizing: border-box;
  width: 9px;
  height: 22px;
  border: 1px solid #777;
  background: #fff;
}

.grip {
  position: absolute;
  right: 3px;
  bottom: 3px;
  width: 11px;
  height: 11px;
  background: radial-gradient(circle, #aaa 1px, transparent 1.4px) 0 0 / 4px 4px;
}
</style>

<style>
html,
body {
  margin: 0;
  background: #fff;
}
</style>
